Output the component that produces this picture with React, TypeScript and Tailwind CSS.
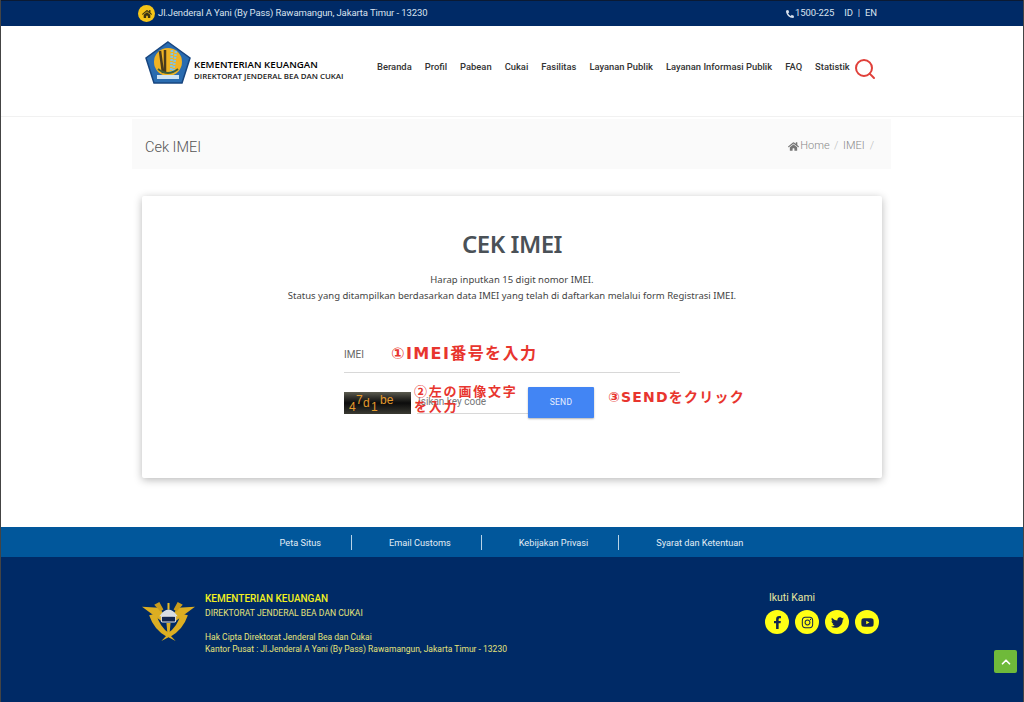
import { Search, ChevronUp } from 'lucide-react'
import { FaHome, FaPhoneAlt, FaFacebookF, FaInstagram, FaTwitter, FaYoutube } from 'react-icons/fa'

const menu = ['Beranda', 'Profil', 'Pabean', 'Cukai', 'Fasilitas', 'Layanan Publik', 'Layanan Informasi Publik', 'FAQ', 'Statistik']
const footerLinks = ['Peta Situs', 'Email Customs', 'Kebijakan Privasi', 'Syarat dan Ketentuan']
const socials = [FaFacebookF, FaInstagram, FaTwitter, FaYoutube]

function KemenkeuLogo() {
  return (
    <svg width="46" height="43" viewBox="0 0 46 43" className="shrink-0">
      <polygon points="23,1 45,17 37,42 9,42 1,17" fill="#2a6cb0" stroke="#17457f" strokeWidth="1.5" />
      <circle cx="23" cy="21" r="14" fill="#f0b323" />
      <path d="M15 10 L18 32 M20 9 L20 32" stroke="#4a3a1c" strokeWidth="2.5" fill="none" />
      <path d="M27 9 L26 32 M31 10 L28 32" stroke="#7fc4e8" strokeWidth="2.5" strokeDasharray="2 1" fill="none" />
      <path d="M13 28 Q23 36 33 28" stroke="#3d5d3a" strokeWidth="2" fill="none" />
      <rect x="12" y="34" width="22" height="4" fill="#cfe3f2" />
    </svg>
  )
}

function CustomsEmblem() {
  return (
    <svg width="53" height="40" viewBox="0 0 52 42" preserveAspectRatio="none" className="shrink-0">
      <path d="M0 5 L17 6 L22 14 L19 20 Z" fill="#dcae22" />
      <path d="M52 5 L35 6 L30 14 L33 20 Z" fill="#dcae22" />
      <path d="M12 3 L17 0 L21 8 L18 10 Z M40 3 L35 0 L31 8 L34 10 Z" fill="#c99c1c" />
      <path d="M7 14 Q12 30 25 37 L27 33 Q17 26 14 12 Z" fill="#dcae22" />
      <path d="M45 14 Q40 30 27 37 L25 33 Q35 26 38 12 Z" fill="#dcae22" />
      <path d="M25 1 L27 1 L27 8 L25 8 Z" fill="#e6bb2b" />
      <path d="M17 15 Q26 1 35 15 Z" fill="#d8dde2" />
      <rect x="19" y="15" width="14" height="6" rx="1" fill="#12264f" stroke="#e6e6e6" strokeWidth="1" />
      <path d="M24 22 L28 22 L27 34 L33 41 L26 37 L19 41 L25 34 Z" fill="#dcae22" />
    </svg>
  )
}

export default function App() {
  return (
    <div className="relative w-[1024px] h-[702px] overflow-hidden flex flex-col bg-white border-x border-[#444] font-['Roboto',sans-serif]">
      {/* Top bar */}
      <div className="h-[26px] shrink-0 bg-[#002a66] border-t border-[#0b1a33] pl-[137px] pr-[146px] flex items-center justify-between text-[9.5px] tracking-[-0.1px] text-[#d9e2ee]">
        <div className="flex items-center gap-[3px]">
          <span className="w-[17px] h-[17px] rounded-full bg-[#f5c518] flex items-center justify-center">
            <FaHome className="w-[10px] h-[10px] text-[#3b3413]" />
          </span>
          <span>Jl.Jenderal A Yani (By Pass) Rawamangun, Jakarta Timur - 13230</span>
        </div>
        <div className="flex items-center">
          <FaPhoneAlt className="w-[8px] h-[8px] mr-[1px]" />
          <span>1500-225</span>
          <span className="ml-[10px]">ID</span>
          <span className="mx-[5px]">|</span>
          <span>EN</span>
        </div>
      </div>

      {/* Header */}
      <div className="h-[91px] shrink-0 flex items-start pl-[144px] border-b border-[#f1f1f1]">
        <div className="mt-[15px]">
          <KemenkeuLogo />
        </div>
        <div className="ml-[3px] mt-[33px] w-[183px] font-['Open_Sans',sans-serif] text-black">
          <div className="text-[9.7px] leading-[12px] font-semibold whitespace-nowrap">KEMENTERIAN KEUANGAN</div>
          <div className="text-[7.9px] leading-[10px] font-semibold text-[#222] whitespace-nowrap">DIREKTORAT JENDERAL BEA DAN CUKAI</div>
        </div>
        <nav className="mt-[34px] flex gap-[13px] text-[9.4px] leading-[14px] font-medium text-[#333] whitespace-nowrap">
          {menu.map((m) => (
            <span key={m}>{m}</span>
          ))}
        </nav>
        <Search className="ml-[3px] mt-[31px] w-[24px] h-[24px] text-[#e0403a]" strokeWidth={2} />
      </div>

      {/* Breadcrumb strip */}
      <div className="mt-[2px] ml-[131px] w-[759px] h-[50px] shrink-0 bg-[#fafafa] flex items-start justify-between pl-[13px] pr-[17px]">
        <div className="mt-[20px] text-[14.5px] leading-[18px] font-light text-[#555]">Cek IMEI</div>
        <div className="mt-[20px] flex items-center text-[11px] leading-[14px] font-light text-[#888]">
          <FaHome className="w-[11px] h-[11px] mr-[1px] text-[#777]" />
          <span>Home</span>
          <span className="mx-[4.5px] text-[#bbb]">/</span>
          <span>IMEI</span>
          <span className="ml-[5px] text-[#bbb]">/</span>
        </div>
      </div>

      {/* Card */}
      <div className="mt-[27px] ml-[141px] w-[740px] h-[282px] shrink-0 bg-white rounded-[2px] shadow-[0_2px_8px_rgba(0,0,0,0.28)] flex flex-col items-center relative">
        <h1 className="mt-[32px] text-[24px] leading-[32px] font-semibold text-[#4a5157] font-['Noto_Sans',sans-serif] tracking-[-0.5px]">CEK IMEI</h1>
        <p className="mt-[12px] text-[9.5px] leading-[16px] text-[#444] text-center font-['Noto_Sans',sans-serif]">
          Harap inputkan 15 digit nomor IMEI.
          <br />
          Status yang ditampilkan berdasarkan data IMEI yang telah di daftarkan melalui form Registrasi IMEI.
        </p>

        <div className="mt-[35px] w-[336px] h-[34px] border-b border-[#d8d8d8] text-[10px] leading-[14px] text-[#666] pt-[9px]">IMEI</div>

        <div className="mt-[14px] w-[336px] flex items-start">
          <div className="mt-[5px] w-[67px] h-[22px] bg-gradient-to-b from-[#5c5c50] via-[#0c0c0c] to-[#3a3a32] relative overflow-hidden text-[#e39a2c] text-[12px] leading-[14px] font-['Liberation_Sans',sans-serif]">
            <span className="absolute left-[5px] top-[8px]">4</span>
            <span className="absolute left-[12px] top-[1px]">7</span>
            <span className="absolute left-[19px] top-[4px]">d</span>
            <span className="absolute left-[27px] top-[8px]">1</span>
            <span className="absolute left-[36px] top-[1px]">be</span>
          </div>
          <div className="ml-[6px] w-[111px] h-[27px] border-b border-[#d8d8d8] text-[10px] leading-[14px] text-[#777] pt-[8px] pl-[1px]">Isikan key code</div>
          <button className="w-[66px] h-[31px] bg-[#4285f4] rounded-[1px] text-[#e8f0fe] text-[8.5px] font-normal tracking-[0.3px] shadow-[0_1px_2px_rgba(0,0,0,0.3)]">SEND</button>
        </div>

        {/* red annotations over the form */}
        <span className="absolute left-[249px] top-[148px] text-[16px] leading-[20px] font-bold text-[#e8352e] tracking-[1.4px] whitespace-nowrap font-['DejaVu_Sans','Noto_Sans_CJK_JP',sans-serif]">①IMEI番号を入力</span>
        <span className="absolute left-[272px] top-[187px] w-[112px] text-[13px] leading-[15px] font-bold text-[#e8352e] tracking-[1.8px] font-['Noto_Sans_CJK_JP',sans-serif]">②左の画像文字<br />を入力</span>
        <span className="absolute left-[466px] top-[191px] text-[14px] leading-[20px] font-bold text-[#e8352e] tracking-[1.2px] whitespace-nowrap font-['DejaVu_Sans','Noto_Sans_CJK_JP',sans-serif]">③SENDをクリック</span>
      </div>

      {/* Links strip */}
      <div className="mt-[49px] h-[30px] shrink-0 bg-[#01579b] flex items-center justify-center text-[9.2px] text-[#e3edf5] pr-[8px]">
        {footerLinks.map((l, i) => (
          <span key={l} className={i < footerLinks.length - 1 ? 'pl-[37px] pr-[30px] leading-[15px] border-r border-[#b9d3e6]' : 'pl-[37px] pr-[30px] leading-[15px]'}>
            {l}
          </span>
        ))}
      </div>

      {/* Footer */}
      <div className="flex-1 bg-[#002a66] pl-[141px] pr-[143px] flex items-start justify-between">
        <div className="flex items-start">
          <div className="mt-[45px]">
            <CustomsEmblem />
          </div>
          <div className="ml-[10px] mt-[35px] text-[#e6e47a]">
            <div className="text-[10px] leading-[14px] font-medium text-[#f2f01e]">KEMENTERIAN KEUANGAN</div>
            <div className="text-[8.6px] leading-[14px]">DIREKTORAT JENDERAL BEA DAN CUKAI</div>
            <div className="mt-[11px] text-[8.5px] leading-[12px]">Hak Cipta Direktorat Jenderal Bea dan Cukai</div>
            <div className="text-[8.5px] leading-[12px]">Kantor Pusat : Jl.Jenderal A Yani (By Pass) Rawamangun, Jakarta Timur - 13230</div>
          </div>
        </div>
        <div className="mt-[33px] w-[115px]">
          <div className="pl-[4px] text-[10.4px] leading-[16px] text-[#e8e8a0]">Ikuti Kami</div>
          <div className="mt-[4px] flex gap-[6px]">
            {socials.map((Icon, i) => (
              <span key={i} className="w-[24px] h-[24px] rounded-full bg-[#ffff14] flex items-center justify-center">
                <Icon className="w-[13px] h-[13px] text-[#12264f]" />
              </span>
            ))}
          </div>
        </div>
      </div>

      {/* Scroll to top */}
      <div className="absolute left-[993px] top-[650px] w-[23px] h-[23px] rounded-[2px] bg-[#6fba3a] flex items-center justify-center">
        <ChevronUp className="w-[14px] h-[14px] text-white" strokeWidth={3} />
      </div>
    </div>
  )
}
